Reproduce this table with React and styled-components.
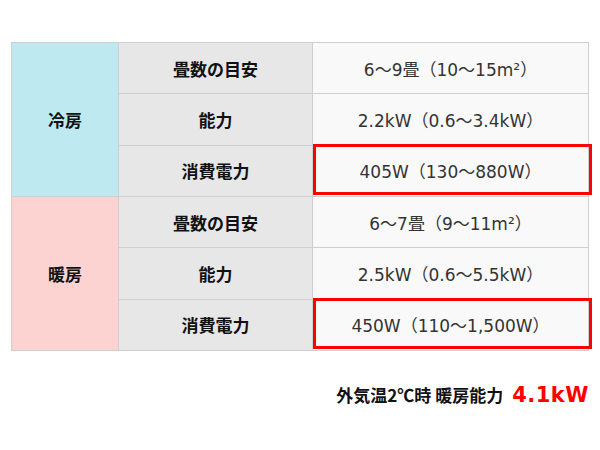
import styled, { createGlobalStyle } from "styled-components";

const GlobalStyle = createGlobalStyle`
  html, body {
    margin: 0;
    padding: 0;
    background: #fff;
  }
  body {
    font-family: "DejaVu Sans", "Noto Sans CJK JP", sans-serif;
    color: #222;
  }
`;

const modes = [
  {
    name: "冷房",
    tone: "cool",
    rows: [
      { label: "畳数の目安", value: "6〜9畳（10〜15m²）" },
      { label: "能力", value: "2.2kW（0.6〜3.4kW）" },
      { label: "消費電力", value: "405W（130〜880W）", mark: true },
    ],
  },
  {
    name: "暖房",
    tone: "warm",
    rows: [
      { label: "畳数の目安", value: "6〜7畳（9〜11m²）" },
      { label: "能力", value: "2.5kW（0.6〜5.5kW）" },
      { label: "消費電力", value: "450W（110〜1,500W）", mark: true },
    ],
  },
];

function App() {
  return (
    <Wrapper>
      <GlobalStyle />
      <SpecTable>
        <tbody>
          {modes.map((mode) =>
            mode.rows.map((row, i) => (
              <tr key={mode.name + row.label}>
                {i === 0 && (
                  <ModeCell rowSpan={mode.rows.length} $tone={mode.tone}>
                    {mode.name}
                  </ModeCell>
                )}
                <LabelCell>{row.label}</LabelCell>
                <ValueCell $mark={row.mark}>{row.value}</ValueCell>
              </tr>
            ))
          )}
        </tbody>
      </SpecTable>
      <Note>
        外気温2℃時 暖房能力<Big>4.1kW</Big>
      </Note>
    </Wrapper>
  );
}

export default App;

const Wrapper = styled.div`
  width: 600px;
  height: 450px;
  padding: 42px 0 0 11px;
  box-sizing: border-box;
`;

const SpecTable = styled.table`
  border-collapse: collapse;
  width: 578px;
  table-layout: fixed;

  td {
    border: 1px solid #cfcfcf;
    height: 51.33px;
    padding: 0;
    text-align: center;
    box-sizing: border-box;
  }
`;

const ModeCell = styled.td`
  width: 107px;
  font-family: "Noto Sans CJK JP", sans-serif;
  font-size: 17px;
  font-weight: bold;
  color: #111;
  background: ${(p) => (p.$tone === "cool" ? "#bfe9f0" : "#fdd3d2")};
`;

const LabelCell = styled.td`
  width: 194px;
  font-family: "Noto Sans CJK JP", sans-serif;
  font-size: 17px;
  font-weight: bold;
  color: #111;
  background: #e7e7e7;
`;

const ValueCell = styled.td`
  background: #f9f9f9;
  color: #333;
  font-size: 17px;
  position: relative;

  ${(p) =>
    p.$mark &&
    `
    &::after {
      content: "";
      position: absolute;
      left: 0;
      right: -4px;
      top: -2px;
      bottom: 1px;
      border: 3px solid #f00;
      pointer-events: none;
    }
  `}
`;

const Note = styled.div`
  width: 578px;
  margin-top: 31px;
  font-family: "Noto Sans CJK JP", sans-serif;
  font-size: 17px;
  font-weight: bold;
  color: #111;
  display: flex;
  justify-content: flex-end;
  align-items: baseline;
`;

const Big = styled.span`
  margin-left: 9px;
  color: #f00;
  font-size: 21px;
  font-family: "DejaVu Sans", sans-serif;
  font-weight: bold;
  letter-spacing: 0.5px;
`;
